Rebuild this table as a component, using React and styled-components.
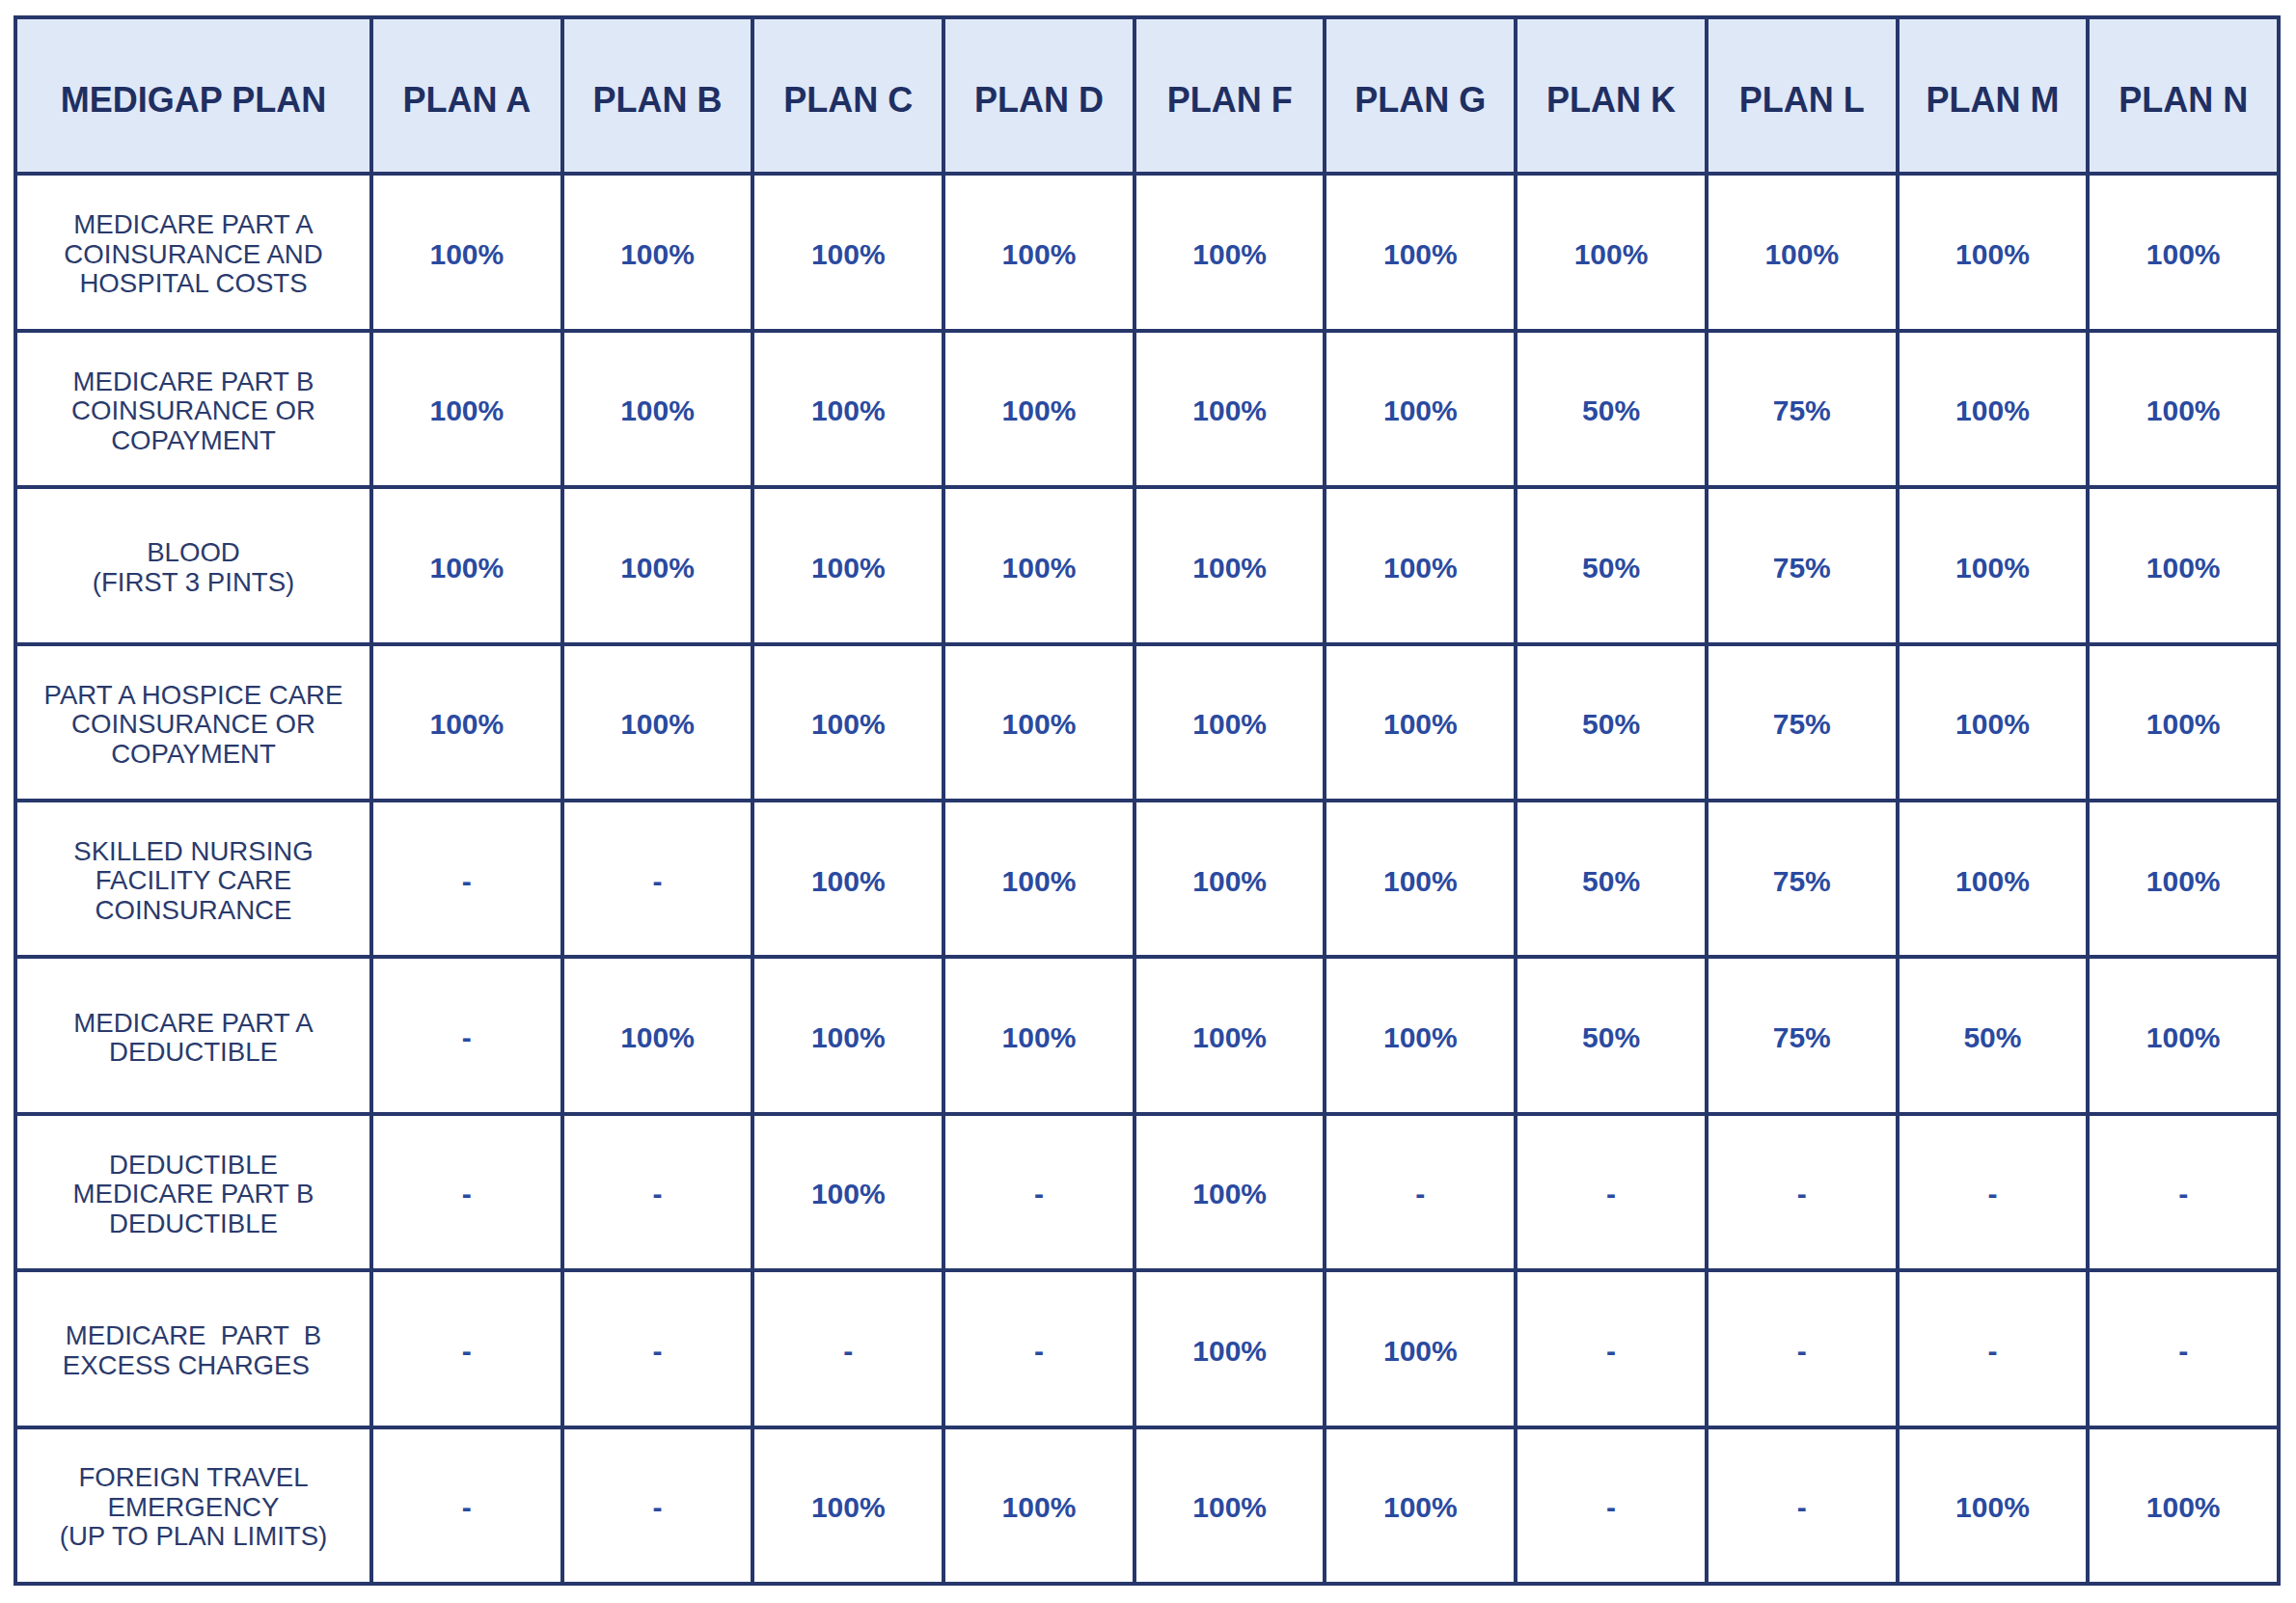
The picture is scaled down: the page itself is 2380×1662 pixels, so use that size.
import React from "react";
import styled, { createGlobalStyle } from "styled-components";

const Global = createGlobalStyle`
  html, body { margin: 0; padding: 0; background: #ffffff; }
  body { font-family: "Liberation Sans", Arial, sans-serif; }
`;

const Page = styled.div`
  padding: 16px 0 0 14px;
`;

const Grid = styled.div`
  display: grid;
  width: 2350px;
  box-sizing: border-box;
  grid-template-columns: 365px repeat(10, 1fr);
  grid-auto-rows: 158.4px;
  gap: 4px;
  padding: 4px;
  background: #27376b;
`;

const Cell = styled.div`
  display: flex;
  align-items: center;
  justify-content: center;
  text-align: center;
  background: #ffffff;
  box-sizing: border-box;
  padding-top: 5px;
`;

const HeadCell = styled(Cell)`
  background: #dfe8f7;
  color: #1f2f62;
  font-weight: 700;
  font-size: 36px;
  padding-top: 10px;
`;

const FeatureCell = styled(Cell)`
  color: #2a3a6c;
  font-size: 27.6px;
  line-height: 30.5px;
  white-space: pre-wrap;
  padding-left: 8px;
  padding-right: 8px;
`;

const ValueCell = styled(Cell)`
  color: #2a4a9f;
  font-weight: 700;
  font-size: 30px;
`;

const plans = ["A", "B", "C", "D", "F", "G", "K", "L", "M", "N"];

const rows = [
  ["MEDICARE PART A\nCOINSURANCE AND\nHOSPITAL COSTS", ["100%", "100%", "100%", "100%", "100%", "100%", "100%", "100%", "100%", "100%"]],
  ["MEDICARE PART B\nCOINSURANCE OR\nCOPAYMENT", ["100%", "100%", "100%", "100%", "100%", "100%", "50%", "75%", "100%", "100%"]],
  ["BLOOD\n(FIRST 3 PINTS)", ["100%", "100%", "100%", "100%", "100%", "100%", "50%", "75%", "100%", "100%"]],
  ["PART A HOSPICE CARE\nCOINSURANCE OR\nCOPAYMENT", ["100%", "100%", "100%", "100%", "100%", "100%", "50%", "75%", "100%", "100%"]],
  ["SKILLED NURSING\nFACILITY CARE\nCOINSURANCE", ["-", "-", "100%", "100%", "100%", "100%", "50%", "75%", "100%", "100%"]],
  ["MEDICARE PART A\nDEDUCTIBLE", ["-", "100%", "100%", "100%", "100%", "100%", "50%", "75%", "50%", "100%"]],
  ["DEDUCTIBLE\nMEDICARE PART B\nDEDUCTIBLE", ["-", "-", "100%", "-", "100%", "-", "-", "-", "-", "-"]],
  ["MEDICARE  PART  B\nEXCESS CHARGES  ", ["-", "-", "-", "-", "100%", "100%", "-", "-", "-", "-"]],
  ["FOREIGN TRAVEL\nEMERGENCY\n(UP TO PLAN LIMITS)", ["-", "-", "100%", "100%", "100%", "100%", "-", "-", "100%", "100%"]],
];

export default function App() {
  return (
    <>
      <Global />
      <Page>
        <Grid>
          <HeadCell>MEDIGAP PLAN</HeadCell>
          {plans.map((p) => (
            <HeadCell key={p}>PLAN {p}</HeadCell>
          ))}
          {rows.map(([label, vals], i) => (
            <React.Fragment key={i}>
              <FeatureCell>{label}</FeatureCell>
              {vals.map((v, j) => (
                <ValueCell key={j}>{v}</ValueCell>
              ))}
            </React.Fragment>
          ))}
        </Grid>
      </Page>
    </>
  );
}
